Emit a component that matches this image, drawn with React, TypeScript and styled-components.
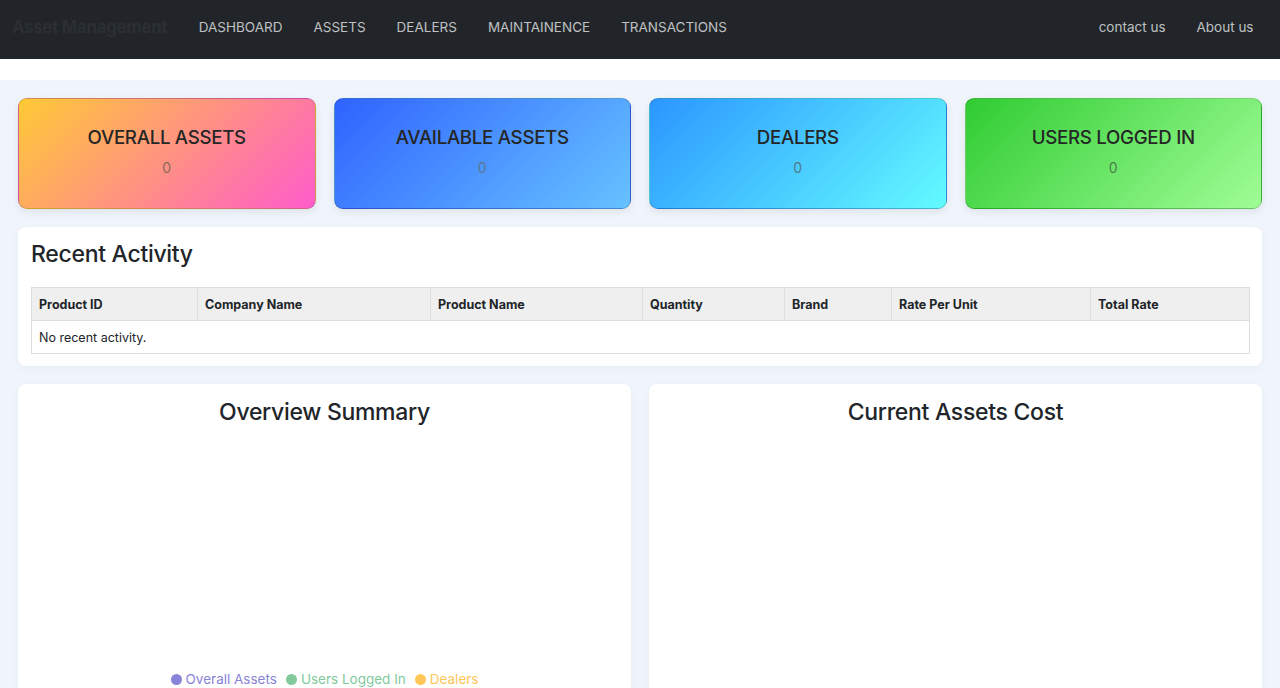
import React from "react";
import styled, { createGlobalStyle } from "styled-components";

const GlobalStyle = createGlobalStyle`
  body {
    margin: 0;
    font-family: Inter, "Liberation Sans", Arial, sans-serif;
    background: #f0f4fb;
    color: #212529;
  }
`;

const stats = [
  { title: "OVERALL ASSETS", value: 0, from: "#ffca35", to: "#ff5ccb", valueColor: "#8a6a5a" },
  { title: "AVAILABLE ASSETS", value: 0, from: "#2f63ff", to: "#66c2ff", valueColor: "#5a7890" },
  { title: "DEALERS", value: 0, from: "#2b96ff", to: "#63fbff", valueColor: "#4f7a88" },
  { title: "USERS LOGGED IN", value: 0, from: "#2fcc32", to: "#a0fd96", valueColor: "#4e7f4e" },
];

const columns = [
  { label: "Product ID", width: 166 },
  { label: "Company Name", width: 233 },
  { label: "Product Name", width: 212 },
  { label: "Quantity", width: 142 },
  { label: "Brand", width: 107 },
  { label: "Rate Per Unit", width: 199 },
  { label: "Total Rate", width: 159 },
];

const legend = [
  { label: "Overall Assets", color: "#8884d8" },
  { label: "Users Logged In", color: "#82ca9d" },
  { label: "Dealers", color: "#ffc658" },
];

const App = () => {
  return (
    <>
      <GlobalStyle />
      <Navbar>
        <Brand>Asset Management</Brand>
        <NavLinks>
          <NavLink>DASHBOARD</NavLink>
          <NavLink>ASSETS</NavLink>
          <NavLink>DEALERS</NavLink>
          <NavLink>MAINTAINENCE</NavLink>
          <NavLink>TRANSACTIONS</NavLink>
        </NavLinks>
        <NavRight>
          <NavLink>contact us</NavLink>
          <NavLink>About us</NavLink>
        </NavRight>
      </Navbar>
      <WhiteBand />
      <Main>
        <StatGrid>
          {stats.map((s) => (
            <StatCard key={s.title} $from={s.from} $to={s.to}>
              <StatTitle>{s.title}</StatTitle>
              <StatValue $color={s.valueColor}>{s.value}</StatValue>
            </StatCard>
          ))}
        </StatGrid>

        <Panel>
          <PanelTitle>Recent Activity</PanelTitle>
          <Table>
            <colgroup>
              {columns.map((c) => (
                <col key={c.label} style={{ width: c.width }} />
              ))}
            </colgroup>
            <thead>
              <tr>
                {columns.map((c) => (
                  <Th key={c.label}>{c.label}</Th>
                ))}
              </tr>
            </thead>
            <tbody>
              <tr>
                <Td colSpan={columns.length}>No recent activity.</Td>
              </tr>
            </tbody>
          </Table>
        </Panel>

        <ChartGrid>
          <ChartCard>
            <ChartTitle>Overview Summary</ChartTitle>
            <ChartArea />
            <Legend>
              {legend.map((l) => (
                <LegendItem key={l.label} $color={l.color}>
                  <Dot $color={l.color} />
                  {l.label}
                </LegendItem>
              ))}
            </Legend>
          </ChartCard>
          <ChartCard>
            <ChartTitle>Current Assets Cost</ChartTitle>
            <ChartArea />
          </ChartCard>
        </ChartGrid>
      </Main>
    </>
  );
};

export default App;

const Navbar = styled.nav`
  height: 59px;
  background: #212529;
  display: flex;
  align-items: center;
  padding: 0 11px 6px 12px;
  box-sizing: border-box;
`;

const Brand = styled.div`
  font-size: 16.7px;
  font-weight: 700;
  color: #2b2f33;
  margin-right: 16px;
  letter-spacing: -0.2px;
`;

const NavLinks = styled.div`
  display: flex;
  align-items: center;
  flex: 1;
`;

const NavRight = styled.div`
  display: flex;
  align-items: center;
`;

const NavLink = styled.a`
  color: rgba(255, 255, 255, 0.72);
  font-size: 13.5px;
  padding: 0 15.5px;
  cursor: pointer;
  white-space: nowrap;
`;

const WhiteBand = styled.div`
  height: 21px;
  background: #ffffff;
`;

const Main = styled.main`
  padding: 18px;
  display: flex;
  flex-direction: column;
  gap: 18px;
`;

const StatGrid = styled.div`
  display: grid;
  grid-template-columns: repeat(4, 1fr);
  gap: 18px;
`;

const StatCard = styled.div<{ $from: string; $to: string }>`
  height: 111px;
  box-sizing: border-box;
  border-radius: 9px;
  border: 1px solid rgba(0, 0, 0, 0.18);
  background: linear-gradient(135deg, ${(p) => p.$from}, ${(p) => p.$to});
  box-shadow: 0 3px 8px rgba(0, 0, 0, 0.08);
  display: flex;
  flex-direction: column;
  align-items: center;
  padding-top: 27px;
`;

const StatTitle = styled.div`
  font-size: 18.7px;
  font-weight: 500;
  color: #262626;
  line-height: 24px;
  letter-spacing: -0.3px;
`;

const StatValue = styled.div<{ $color: string }>`
  margin-top: 8px;
  font-size: 14px;
  color: ${(p) => p.$color};
  line-height: 20px;
`;

const Panel = styled.section`
  background: #ffffff;
  border-radius: 8px;
  box-shadow: 0 2px 8px rgba(0, 0, 0, 0.04);
  padding: 13px 13px 12px;
`;

const PanelTitle = styled.h2`
  margin: 0 0 18px;
  font-size: 23px;
  font-weight: 500;
  line-height: 29px;
  letter-spacing: -0.3px;
`;

const Table = styled.table`
  width: 100%;
  border-collapse: collapse;
  table-layout: fixed;
  font-size: 12.5px;
`;

const Th = styled.th`
  text-align: left;
  font-weight: 700;
  background: #efefef;
  border: 1px solid #dedede;
  height: 33px;
  padding: 0 7px;
  box-sizing: border-box;
`;

const Td = styled.td`
  border: 1px solid #dedede;
  height: 33px;
  padding: 0 7px;
  box-sizing: border-box;
`;

const ChartGrid = styled.div`
  display: grid;
  grid-template-columns: 1fr 1fr;
  gap: 18px;
`;

const ChartCard = styled.section`
  background: #ffffff;
  border-radius: 8px;
  box-shadow: 0 2px 8px rgba(0, 0, 0, 0.04);
  padding: 14px 13px 20px;
  display: flex;
  flex-direction: column;
  align-items: center;
  min-height: 330px;
`;

const ChartTitle = styled.h2`
  margin: 0;
  font-size: 23px;
  font-weight: 500;
  line-height: 29px;
  letter-spacing: -0.3px;
`;

const ChartArea = styled.div`
  height: 244px;
  width: 100%;
`;

const Legend = styled.div`
  display: flex;
  gap: 9px;
  align-items: center;
`;

const LegendItem = styled.span<{ $color: string }>`
  display: inline-flex;
  align-items: center;
  gap: 4px;
  font-size: 13.5px;
  color: ${(p) => p.$color};
`;

const Dot = styled.span<{ $color: string }>`
  width: 11px;
  height: 11px;
  border-radius: 50%;
  background: ${(p) => p.$color};
`;
